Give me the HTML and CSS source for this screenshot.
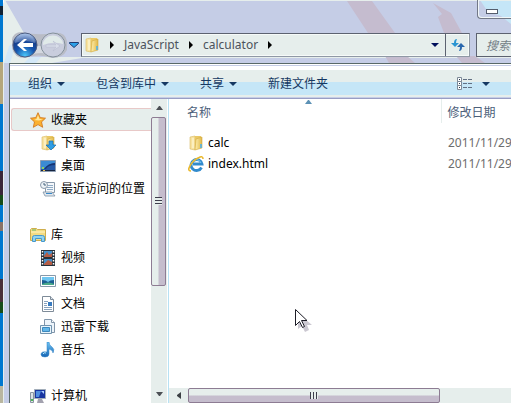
FILE: index.html
```html
<!DOCTYPE html>
<html lang="zh-CN">
<head>
    <meta charset="UTF-8">
    <meta name="viewport" content="width=device-width, initial-scale=1.0">
    <title>calculator</title>
    <link rel="stylesheet" href="styles.css">
</head>
<body>
    <svg class="symbols" aria-hidden="true">
        <defs>
            <linearGradient id="gold" x1="0" x2="1"><stop offset="0" stop-color="#fff0ae"/><stop offset="1" stop-color="#e0b748"/></linearGradient>
            <linearGradient id="blue" x1="0" y1="0" x2="0" y2="1"><stop offset="0" stop-color="#6fc4f4"/><stop offset="1" stop-color="#1565b5"/></linearGradient>
            <radialGradient id="orb" cx=".5" cy=".95" r=".9"><stop offset="0" stop-color="#4cc8fa"/><stop offset=".45" stop-color="#1554ae"/><stop offset=".75" stop-color="#173f8c"/><stop offset="1" stop-color="#a5bfe5"/></radialGradient>
            <symbol id="folder" viewBox="0 0 16 16">
                <path d="M2 2l5-1v14l-5-1z" fill="#f8e3a0" stroke="#d9bb62" stroke-width=".6"/>
                <path d="M7 1h6v11l-6 3z" fill="#eac865"/>
                <path d="M8 4l6-2v11l-7 2z" fill="url(#gold)" stroke="#d2aa42" stroke-width=".6"/>
                <path d="M5 3v10" stroke="#fffbe0"/>
                <path d="M13 9v4" stroke="#4fb2eb" stroke-width="1.6"/>
            </symbol>
        </defs>
    </svg>

    <div class="desktop">
        <div class="wallpaper"></div>
        <div class="window">
            <header class="titlebar">
                <svg class="glass" width="507" height="63" viewBox="4 0 507 63" aria-hidden="true">
                    <path d="M4 0h1l19 33v24h57v-1h430v7H4z" fill="#e6eeec"/>
                    <path d="M24 63l6-6h11l-5 6zM4 63h6l7-22-8 5z" fill="#d3e8f8"/>
                    <path d="M347 1h25l23 32h-27zM433 3l18 10 11 20h-18l-6-16 4-3z" fill="#c5bccf"/>
                    <path d="M82 58h429v5H52z" fill="#c5cde6"/>
                    <path d="M385 56h22l8 7h-26zM456 56h19l10 7h-23z" fill="#c5bccf"/>
                    <path d="M12 40q1-8 10-8 16 4 31 1 12-2 14 8v9q-4 8-15 8-14-5-27 0-11 0-13-10z" fill="#b9bcc6"/>
                    <path d="M20 46h35v9q-15-4-26 0z" fill="#d4d8e0"/>
                    <path d="M480 0h31v24l-10-8-13-4z" fill="#c5e6f7"/>
                    <path d="M4 .5h507" stroke="#e6eeec"/>
                </svg>
                <button class="minimize" aria-label="最小化"><span></span></button>
                <div class="navbar">
                    <button class="orb" aria-label="后退">
                        <svg width="26" height="26" viewBox="0 0 26 26"><circle cx="13" cy="13" r="12" fill="url(#orb)" stroke="#4c5d83"/><path d="M3 11a10 9 0 0 1 20 0q-10-4-20 0z" fill="#9fbae5" opacity=".45"/><path d="M5 13l7-6h3l-4 4h10v4H11l4 4h-3z" fill="#fff"/></svg>
                    </button>
                    <button class="orb" aria-label="前进">
                        <svg width="26" height="26" viewBox="0 0 26 26"><circle cx="13" cy="13" r="12" fill="#c9cddd" stroke="#84919b"/><path d="M3 13a10 9 0 0 1 20-1q-10-3-20 1z" fill="#e0eae9"/><path d="M6 13h10l-3-4 7 5-7 5 3-4H6z" fill="#d8dde9" stroke="#b4b9cd" stroke-width=".5"/></svg>
                    </button>
                    <button class="recent" aria-label="最近浏览的页面">
                        <svg width="10" height="6" viewBox="0 0 10 6"><path d="M.5.5h9v1L5 5.500.5 1.500z" fill="#2da0e8" stroke="#213b70"/></svg>
                    </button>
                    <nav class="address" aria-label="地址">
                        <svg width="16" height="16"><use href="#folder"/></svg>
                        <span class="crumb-arrow"></span>
                        <a href="#javascript">JavaScript</a>
                        <span class="crumb-arrow"></span>
                        <a href="#calculator">calculator</a>
                        <span class="crumb-arrow"></span>
                        <button class="history" aria-label="以前的位置"><span class="down-arrow"></span></button>
                        <button class="refresh" aria-label="刷新">
                            <svg width="14" height="14" viewBox="0 0 14 14"><path d="M6 1Q3 1 3 5H0l4 4 4-4H5Q5 3 6 1z" fill="#2b95d2"/><path d="M8 13q3 0 3-4h3l-4-4-4 4h3q0 2-1 4z" fill="#2967ad"/></svg>
                        </button>
                    </nav>
                    <input class="search" type="text" placeholder="搜索 calculator" aria-label="搜索">
                </div>
            </header>

            <div class="client">
                <div class="toolbar">
                    <button>组织 <span class="down-arrow"></span></button>
                    <button>包含到库中 <span class="down-arrow"></span></button>
                    <button>共享 <span class="down-arrow"></span></button>
                    <button>新建文件夹</button>
                    <button class="view" aria-label="更改您的视图">
                        <svg width="15" height="13" viewBox="0 0 15 13"><path d="M.5.5h4v4h-4zM.5 4.500h4v4h-4zM.5 8.500h4v4h-4z" fill="#fff" stroke="#7d8a98"/><path d="M2 2h1v1H2zM2 6h1v1H2zM2 10h1v1H2z" fill="#234"/><path d="M6 2.500h4m1 0h4M6 6.500h4m1 0h4M6 10.500h4m1 0h4" stroke="#627083"/></svg>
                        <span class="down-arrow"></span>
                    </button>
                </div>

                <div class="content">
                    <aside class="sidebar">
                        <nav class="tree" aria-label="导航窗格">
                            <a class="group selected" href="#favorites">
                                <svg width="16" height="16" viewBox="0 0 16 16"><path d="M8 .7l2.200 4.900 5.300.6-4 3.700 1.200 5.400L8 12.600l-4.700 2.700 1.200-5.400-4-3.700 5.300-.6z" fill="#fbb12f" stroke="#d37b22" stroke-width=".9"/><path d="M8 3l1.500 4 3.500.3-4 1.200-5-.5 2.500-1z" fill="#ffe9a0"/></svg>
                                收藏夹</a>
                            <ul>
                                <li><a href="#downloads">
                                    <svg width="16" height="16"><use href="#folder"/><path d="M9 6h4v4h3l-5 5-5-5h3z" fill="#2f9ee5" stroke="#1d6dab" stroke-width=".7"/></svg>
                                    下载</a></li>
                                <li><a href="#desktop">
                                    <svg width="16" height="16" viewBox="0 0 16 16"><path d="M.5 2.500h15v11H.5z" fill="#2458a5" stroke="#8d9db2"/><path d="M1 3h14v2Q8 6 4 11H1z" fill="#3b8bd3"/><path d="M4 11Q8 5 15 5v2Q8 7 6 11z" fill="#163575"/><path d="M1 12.500h14" stroke="#15233f"/><path d="M2 9h2v2H2z" fill="#8fd45c"/><path d="M3 12h2v1H3z" fill="#e5bf52"/></svg>
                                    桌面</a></li>
                                <li><a href="#recent">
                                    <svg width="16" height="16" viewBox="0 0 16 16"><path d="M5.500 1.500h9v10h-9z" fill="#f5f8fb" stroke="#8798aa"/><path d="M8 4.500h5M7 6.500h6M7 8.500h6" stroke="#8fabc5"/><path d="M3 11h9l3 4H5z" fill="#e1e8ef" stroke="#8292a2" stroke-width=".8"/><path d="M6 12.500h6" stroke="#3889c8"/><circle cx="4" cy="4" r="3.500" fill="#edf3f7" stroke="#8b9aaa"/><path d="M4 2v2h2" fill="none" stroke="#47637c"/></svg>
                                    最近访问的位置</a></li>
                            </ul>
                            <a class="group" href="#libraries">
                                <svg width="16" height="16" viewBox="0 0 16 16"><path d="M.5 2.500l1-1h5l1 1h8v11H.5z" fill="#f4dc82" stroke="#cfae4d"/><path d="M2 3h4" stroke="#62b66d"/><path d="M1 5h14" stroke="#fff5c4"/><path d="M2.500 14.500v-4q0-2 2-2h8q2 0 2 2v4h-3v-3h-6v3z" fill="#8fd3f1" stroke="#4798cb"/></svg>
                                库</a>
                            <ul>
                                <li><a href="#videos">
                                    <svg width="16" height="16" viewBox="0 0 16 16"><path d="M1 0h14v16H1z" fill="#29323b"/><path d="M4 1h8v6H4zM4 9h8v6H4z" fill="#4390cd"/><path d="M4 6l3-4 2 3 3-2v4H4zM4 14l4-4 4 2v3H4z" fill="#b65d45"/><path d="M2.500 1v15M13.500 1v15" stroke="#fff" stroke-width="1.500" stroke-dasharray="1.500 1.500"/></svg>
                                    视频</a></li>
                                <li><a href="#pictures">
                                    <svg width="16" height="16" viewBox="0 0 16 16"><path d="M.5 2.500h15v11H.5z" fill="#fff" stroke="#8799aa"/><path d="M2 4h12v8H2z" fill="#6fc6f1"/><path d="M2 7q4 0 6 2 2-2 6-2v5H2z" fill="#1c5e91"/><path d="M2 11q7-3 12 0v1H2z" fill="#4aaa8b"/></svg>
                                    图片</a></li>
                                <li><a href="#documents">
                                    <svg width="16" height="16" viewBox="0 0 16 16"><path d="M2.500.5h8l3 3v12h-11z" fill="#fff" stroke="#7e8b98"/><path d="M10.500.5v3h3" fill="#dce4ec" stroke="#7e8b98"/><path d="M4 5.500h4M4 7.500h3M4 9.500h3M4 11.500h8M4 13.500h8" stroke="#8aa3bd"/><path d="M8 6h4v4H8z" fill="#387bc0"/></svg>
                                    文档</a></li>
                                <li><a href="#thunder">
                                    <svg width="16" height="16" viewBox="0 0 16 16"><path d="M4.500.5h7l3 3v10h-10z" fill="#edf4fa" stroke="#8195a9"/><path d="M11.500.5v3h3" fill="#fff" stroke="#8195a9"/><path d="M.5 6.500h11v8H.5z" fill="#e8f4fb" stroke="#7293ad"/><path d="M2.500 8.500h7v4h-7z" fill="#62b6e8" stroke="#3d88bd"/></svg>
                                    迅雷下载</a></li>
                                <li><a href="#music">
                                    <svg width="16" height="16" viewBox="0 0 16 16"><path d="M7 0h2q0 3 3 5t1 6q0-3-4-4v5q0 3-4 3-4 0-4-2.500Q1 9 7 10z" fill="url(#blue)" stroke="#2f80c4" stroke-width=".5"/><path d="M3 12q1-2 3-1" stroke="#b9e7fb" fill="none"/></svg>
                                    音乐</a></li>
                            </ul>
                            <a class="group" href="#computer">
                                <svg width="16" height="16" viewBox="0 0 16 16"><path d="M4.500 1.500h11v9h-11z" fill="#1935a0" stroke="#a2adb9"/><path d="M6 3h5l-2 6H6z" fill="#4f8de0"/><path d="M11 3h3v3z" fill="#aacdff"/><path d="M8 11h4l2 4H7z" fill="#a3a2af"/><path d="M.5 4.500h3v10h-3z" fill="#dce2e7" stroke="#8995a1"/><path d="M1 11h2v2H1z" fill="#4ab854"/></svg>
                                计算机</a>
                        </nav>
                        <div class="vscroll">
                            <button aria-label="向上滚动"><svg width="7" height="4" viewBox="0 0 7 4"><path d="M0 4h7L4 0H3z" fill="#4c5055"/></svg></button>
                            <div class="track"><div class="thumb"><span class="grip"></span></div></div>
                            <button aria-label="向下滚动"><svg width="7" height="4" viewBox="0 0 7 4"><path d="M0 0h7L4 4H3z" fill="#4c5055"/></svg></button>
                        </div>
                    </aside>

                    <main class="files">
                        <table>
                            <thead>
                                <tr>
                                    <th class="name">名称<svg class="sort" width="7" height="4" viewBox="0 0 7 4"><path d="M0 4h7L4 0H3z" fill="#5c91b5"/></svg></th>
                                    <th class="date">修改日期</th>
                                </tr>
                            </thead>
                            <tbody>
                                <tr>
                                    <td><a href="#calc"><svg width="16" height="16"><use href="#folder"/></svg>calc</a></td>
                                    <td class="date">2011/11/29</td>
                                </tr>
                                <tr>
                                    <td><a href="#index">
                                        <svg width="16" height="16" viewBox="0 0 16 16"><path d="M13.500 11.500A5.500 5.500 0 1 1 14 8H5" fill="none" stroke="#328bcd" stroke-width="2.800"/><path d="M13 7A5 5 0 0 0 3.500 7" fill="none" stroke="#79caf5"/><path d="M3 15Q-1 15 2 10 5 4 11 1.500 15-.5 15 3" fill="none" stroke="#eab92f" stroke-width="1.600"/></svg>index.html</a></td>
                                    <td class="date">2011/11/29</td>
                                </tr>
                            </tbody>
                        </table>
                        <div class="hscroll">
                            <button aria-label="向左滚动"><svg width="4" height="7" viewBox="0 0 4 7"><path d="M4 0v7L0 4V3z" fill="#3c4045"/></svg></button>
                            <div class="track"><div class="thumb"><span class="grip"></span></div></div>
                        </div>
                    </main>
                </div>
            </div>
        </div>
    </div>

    <svg class="cursor" width="18" height="24" viewBox="0 0 18 24" aria-hidden="true">
        <path d="M3 4v16l4-3 3 6 4-2-2-5h5z" fill="#a9a4b3" opacity=".6"/>
        <path d="M.5.5v16l4-4 3 6 2-1-3-6h5.500z" fill="#fff" stroke="#1c1c26"/>
    </svg>
</body>
</html>
```
FILE: styles.css
```css
* {
    box-sizing: border-box;
}

body {
    margin: 0;
    font-family: "Noto Sans", "Noto Sans CJK SC", sans-serif;
    font-size: 12px;
    line-height: 16px;
    color: #000;
    overflow: hidden;
}

button {
    display: flex;
    align-items: center;
    justify-content: center;
    padding: 0;
    border: none;
    background: none;
    font: inherit;
    color: inherit;
}

a {
    color: inherit;
    text-decoration: none;
}

svg {
    display: block;
    flex: none;
}

.symbols {
    position: absolute;
    width: 0;
    height: 0;
}

.desktop {
    display: flex;
    height: 100vh;
}

.wallpaper {
    width: 3px;
    background: linear-gradient(#0078d0 0 6px, #123 6px 15px, #0078d0 15px 62px, #b5a67c 62px 104px, #0078d0 104px 171px, #3b2638 171px 195px, #174c18 195px 205px, #0078d0 205px 222px, #8b7368 222px 231px, #0078d0 231px 279px, #4a3038 279px 302px, #174c18 302px 313px, #0078d0 313px 386px, #b9b6a0 386px);
}

.window {
    flex: 1;
    min-width: 0;
    display: flex;
    flex-direction: column;
    border-left: 1px solid #e6eeec;
    border-top-left-radius: 5px;
    background: #c5cde6;
}

/* title bar */
.titlebar {
    position: relative;
    height: 63px;
    overflow: hidden;
}

.glass {
    position: absolute;
    top: 0;
    left: 0;
}

.minimize {
    position: absolute;
    top: 0;
    right: 0;
    width: 34px;
    height: 19px;
    padding: 4px 5px 0 0;
    border: 1px solid #727886;
    border-width: 0 0 1px 1px;
    border-bottom-left-radius: 4px;
    box-shadow: inset 1px -1px #f0f6f8;
}

.minimize span {
    width: 12px;
    height: 5px;
    border: 1px solid #555d6d;
    background: #fff;
}

.navbar {
    position: relative;
    display: flex;
    align-items: center;
    height: 24px;
    margin-top: 33px;
    padding-left: 8px;
}

.orb {
    width: 26px;
    height: 26px;
    margin-right: 2px;
}

.recent {
    width: 12px;
    height: 20px;
}

.address {
    flex: 1;
    display: flex;
    align-items: center;
    gap: 10px;
    height: 24px;
    margin: 0 6px 0 1px;
    padding-left: 2px;
    border: 1px solid #5c6270;
    border-right-color: #8f98a5;
    border-bottom-color: #8f98a5;
    background: #e6eeec;
    box-shadow: inset 0 0 0 1px #f6faf9;
    color: #4c535c;
}

.crumb-arrow {
    border: 4px solid transparent;
    border-left-color: #000;
    border-right-width: 0;
}

.down-arrow {
    border: 4px solid transparent;
    border-top-color: #163862;
    border-bottom-width: 0;
}

.history {
    margin-left: auto;
    margin-right: -4px;
    height: 22px;
}

.history .down-arrow {
    border-top-color: #000f5b;
}

.refresh {
    width: 24px;
    height: 22px;
    border-left: 1px solid #5c6270;
}

.search {
    width: 35px;
    height: 24px;
    padding: 0 0 0 9px;
    border: 1px solid #5c6270;
    border-right: none;
    border-radius: 0;
    background: #e6eeec;
    font: inherit;
    font-style: italic;
}

.search::placeholder {
    color: #747e86;
    opacity: 1;
}

/* window contents */
.client {
    flex: 1;
    min-height: 0;
    display: flex;
    flex-direction: column;
    margin-left: 5px;
    border-top: 1px solid #596967;
    border-left: 1px solid #596967;
    background: #fff;
}

.toolbar {
    display: flex;
    gap: 31px;
    height: 35px;
    padding: 4px 21px 0 18px;
    background: linear-gradient(#fff 0 1px, #c5cde6 1px 2px, #fff 2px 6px, #e6eeec 6px 18px, #c5e6f7 18px 31px, #e6eeec 31px 33px, #c5cde6 33px 34px, #989dc4 34px);
    color: #163862;
}

.toolbar button {
    gap: 5px;
    white-space: nowrap;
}

.toolbar .view {
    gap: 10px;
    margin-left: auto;
}

.content {
    flex: 1;
    min-height: 0;
    display: flex;
}

/* navigation pane */
.sidebar {
    display: flex;
    width: 159px;
    border-right: 1px solid #b8e1f3;
}

.tree {
    flex: 1;
    min-width: 0;
    padding: 9px 0 0 1px;
    overflow: hidden;
    white-space: nowrap;
}

.tree a {
    display: flex;
    align-items: center;
    gap: 5px;
    height: 23px;
    padding-left: 29px;
}

.tree .group {
    padding-left: 19px;
}

.tree .selected {
    border: 1px solid #e8c9c8;
    border-right: none;
    border-radius: 3px 0 0 3px;
    padding-left: 18px;
    background: #e6eeec;
}

.tree ul {
    list-style: none;
    margin: 0 0 23px;
    padding: 0;
}

/* scroll bars */
.vscroll {
    display: flex;
    flex-direction: column;
    width: 16px;
    margin-right: 1px;
    background: #e6eeec;
}

.vscroll button {
    height: 18px;
}

.track {
    flex: 1;
}

.thumb {
    display: flex;
    align-items: center;
    justify-content: center;
    border: 1px solid #8d7c93;
    border-radius: 2px;
}

.vscroll .thumb {
    width: 15px;
    height: 63%;
    background: linear-gradient(to right, #e6eeec 6px, #c5bdcd 7px);
}

.vscroll .grip {
    width: 7px;
    height: 8px;
    background: repeating-linear-gradient(#3e3e4c 0 1px, #e6eeec 1px 3px);
}

.hscroll {
    display: flex;
    height: 15px;
    background: #e6eeec;
}

.hscroll button {
    width: 19px;
}

.hscroll .thumb {
    width: 78%;
    height: 15px;
    background: linear-gradient(#e6eeec 6px, #c5bdcd 7px);
}

.hscroll .grip {
    width: 8px;
    height: 7px;
    background: repeating-linear-gradient(to right, #3e3e4c 0 1px, #e6eeec 1px 3px);
}

/* file list */
.files {
    flex: 1;
    min-width: 0;
    display: flex;
    flex-direction: column;
    justify-content: space-between;
}

table {
    width: 100%;
    border-collapse: collapse;
    table-layout: fixed;
}

th {
    position: relative;
    height: 24px;
    padding: 3px 0 0 18px;
    font-weight: normal;
    text-align: left;
    color: #4c607a;
}

.sort {
    position: absolute;
    top: 1px;
    left: 50%;
}

td {
    height: 21px;
    padding: 0 0 0 19px;
    white-space: nowrap;
    overflow: hidden;
}

td a {
    display: flex;
    align-items: center;
    gap: 4px;
}

th.date {
    width: 70px;
    padding-left: 6px;
    border-left: 1px solid #e6eeec;
    white-space: nowrap;
}

td.date {
    padding-left: 7px;
    color: #6d6d6d;
}

tbody::before {
    content: "";
    display: block;
    height: 9px;
}

.cursor {
    position: absolute;
    top: 309px;
    left: 295px;
}
```
